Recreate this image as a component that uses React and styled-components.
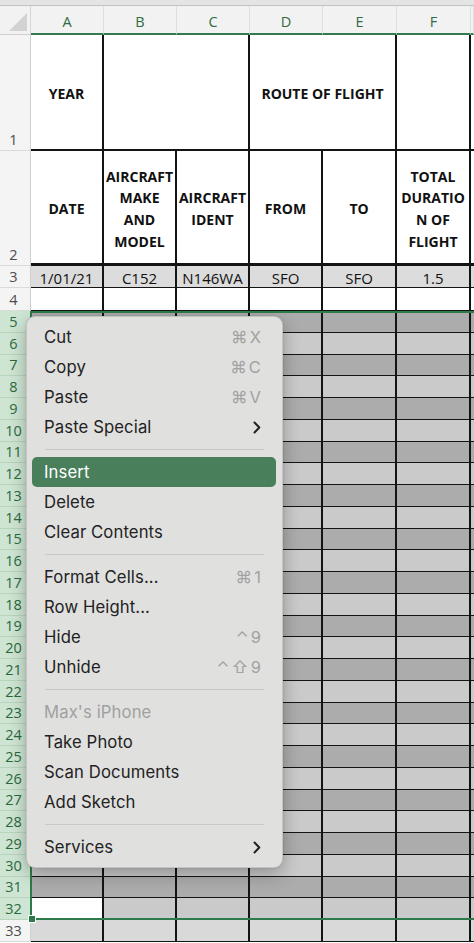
import React from 'react'
import styled, { createGlobalStyle } from 'styled-components'

const GlobalStyle = createGlobalStyle`
  html, body {
    margin: 0;
    padding: 0;
    background: #fff;
    overflow: hidden;
  }
  body {
    font-family: "Open Sans", "Liberation Sans", sans-serif;
  }
`

const Page = styled.div`
  position: relative;
  width: 474px;
  height: 943px;
  overflow: hidden;
  background: #fff;
`

const TopStrip = styled.div`
  height: 5px;
  background: #e4e4e4;
  border-bottom: 1px solid #c2c2c2;
`

const Grid = styled.div`
  display: grid;
  grid-template-columns: 31px 73px 73px 73px 73px 74px 74px 1fr;
  grid-template-rows: 29px 116px 115px 22px 23px repeat(29, 21.75px);
`

const Corner = styled.div`
  position: relative;
  background: #f2f2f2;
  border-right: 1px solid #d6d6d6;
  border-bottom: 1px solid #d0d0d0;
  box-sizing: border-box;
  &::after {
    content: '';
    position: absolute;
    right: 3px;
    bottom: 3px;
    border-style: solid;
    border-width: 0 0 18px 18px;
    border-color: transparent transparent #d2d2d2 transparent;
  }
`

const ColHead = styled.div`
  display: flex;
  align-items: center;
  justify-content: center;
  background: #f2f2f2;
  border-right: 1px solid #dedede;
  border-bottom: 2px solid #357a4c;
  box-sizing: border-box;
  color: #2f6b44;
  font-size: 14.5px;
  padding-top: 4px;
`

const RowHead = styled.div`
  display: flex;
  align-items: flex-end;
  justify-content: center;
  box-sizing: border-box;
  padding: 0 3px 0 0;
  font-size: 14.5px;
  line-height: 20px;
  background: ${p => (p.$selected ? '#cfe5d3' : '#f4f4f4')};
  color: ${p => (p.$selected ? '#2a6a3d' : '#4c4c4c')};
  border-bottom: 1px solid ${p => (p.$selected ? '#b7d4bd' : '#dadada')};
  border-right: 1px solid ${p => (p.$selected ? '#a9ccb0' : '#d0d0d0')};
`

const Cell = styled.div`
  grid-column: span ${p => p.$span || 1};
  display: flex;
  align-items: center;
  justify-content: center;
  box-sizing: border-box;
  padding-top: 4px;
  text-align: center;
  background: ${p => p.$bg || '#fff'};
  border-right: ${p => (p.$last ? 'none' : '2px solid #141414')};
  border-bottom: ${p => p.$bottom || '1px'} solid #141414;
  font-size: ${p => (p.$bold ? '14px' : '15px')};
  font-weight: ${p => (p.$bold ? 700 : 400)};
  line-height: 21.7px;
  color: #111;
  white-space: nowrap;
  overflow: hidden;
`

const Selection = styled.div`
  position: absolute;
  top: 311px;
  left: 30px;
  right: -6px;
  height: 609px;
  border: 2px solid #2f7a4b;
  box-sizing: border-box;
  pointer-events: none;
`

const Handle = styled.div`
  position: absolute;
  left: 28px;
  top: 915px;
  width: 6px;
  height: 6px;
  background: #2f7a4b;
  border: 1px solid #fff;
`

const Menu = styled.div`
  position: absolute;
  top: 316px;
  left: 26px;
  width: 257px;
  padding: 5px 0 5px;
  box-sizing: border-box;
  background: #e0e0df;
  border-radius: 9px;
  border: 0.5px solid rgba(0, 0, 0, 0.12);
  box-shadow: 0 6px 18px rgba(0, 0, 0, 0.28), 0 0 2px rgba(0, 0, 0, 0.15);
  font-family: Inter, "DejaVu Sans", sans-serif;
`

const Item = styled.div`
  display: flex;
  align-items: center;
  justify-content: space-between;
  height: 30px;
  margin: 0 6px 0 5px;
  padding: 0 15px 0 12px;
  border-radius: 5px;
  font-size: 16.7px;
  letter-spacing: 0.1px;
  background: ${p => (p.$active ? '#4a7f5c' : 'transparent')};
  color: ${p => (p.$active ? '#fff' : p.$disabled ? '#a0a0a0' : '#222')};
`

const Shortcut = styled.span`
  display: flex;
  gap: 2px;
  color: #a2a2a2;
  font-size: 16.5px;
  font-family: Inter, "DejaVu Sans", sans-serif;
`

const Separator = styled.div`
  height: 1px;
  margin: 7px 18px;
  background: #c9c9c9;
`

const Chevron = () => (
  <svg width="8" height="13" viewBox="0 0 8 13">
    <path d="M1.5 1.5 L6.3 6.5 L1.5 11.5" fill="none" stroke="#222" strokeWidth="2" strokeLinecap="round" strokeLinejoin="round" />
  </svg>
)

const menu = [
  { label: 'Cut', key: '⌘X' },
  { label: 'Copy', key: '⌘C' },
  { label: 'Paste', key: '⌘V' },
  { label: 'Paste Special', sub: true },
  'sep',
  { label: 'Insert', active: true },
  { label: 'Delete' },
  { label: 'Clear Contents' },
  'sep',
  { label: 'Format Cells...', key: '⌘1' },
  { label: 'Row Height...' },
  { label: 'Hide', key: '⌃9' },
  { label: 'Unhide', key: '⌃⇧9' },
  'sep',
  { label: "Max's iPhone", disabled: true },
  { label: 'Take Photo' },
  { label: 'Scan Documents' },
  { label: 'Add Sketch' },
  'sep',
  { label: 'Services', sub: true },
]

const cols = ['A', 'B', 'C', 'D', 'E', 'F']
const Lines = ({ lines }) => (
  <div>
    {lines.map(l => (
      <div key={l}>{l}</div>
    ))}
  </div>
)

const App = () => {
  const band = []
  for (let r = 5; r <= 33; r++) {
    const selected = r <= 32
    const odd = r % 2 === 1
    const bg = selected ? (odd ? '#acacac' : '#cacaca') : odd ? '#d9d9d9' : '#fff'
    band.push(
      <React.Fragment key={r}>
        <RowHead $selected={selected}>{r}</RowHead>
        {cols.map(c => (
          <Cell key={c} $bg={r === 32 && c === 'A' ? '#fff' : bg} />
        ))}
        <Cell $bg={bg} $last />
      </React.Fragment>
    )
  }

  return (
    <Page>
      <GlobalStyle />
      <TopStrip />
      <Grid>
        <Corner />
        {cols.map(c => (
          <ColHead key={c}>{c}</ColHead>
        ))}
        <ColHead />

        <RowHead>1</RowHead>
        <Cell $bold $bottom="2px">YEAR</Cell>
        <Cell $span={2} $bottom="2px" />
        <Cell $span={2} $bold $bottom="2px">ROUTE OF FLIGHT</Cell>
        <Cell $bottom="2px" />
        <Cell $last $bottom="2px" />

        <RowHead>2</RowHead>
        <Cell $bold $bottom="3px">DATE</Cell>
        <Cell $bold $bottom="3px"><Lines lines={['AIRCRAFT', 'MAKE', 'AND', 'MODEL']} /></Cell>
        <Cell $bold $bottom="3px"><Lines lines={['AIRCRAFT', 'IDENT']} /></Cell>
        <Cell $bold $bottom="3px">FROM</Cell>
        <Cell $bold $bottom="3px">TO</Cell>
        <Cell $bold $bottom="3px"><Lines lines={['TOTAL', 'DURATIO', 'N OF', 'FLIGHT']} /></Cell>
        <Cell $last $bottom="3px" />

        <RowHead>3</RowHead>
        {['1/01/21', 'C152', 'N146WA', 'SFO', 'SFO', '1.5'].map((v, i) => (
          <Cell key={i} $bg="#dcdcdc">{v}</Cell>
        ))}
        <Cell $bg="#dcdcdc" $last />

        <RowHead>4</RowHead>
        {cols.map(c => (
          <Cell key={c} />
        ))}
        <Cell $last />

        {band}
      </Grid>

      <Selection />
      <Handle />

      <Menu>
        {menu.map((m, i) =>
          m === 'sep' ? (
            <Separator key={i} />
          ) : (
            <Item key={i} $active={m.active} $disabled={m.disabled}>
              <span>{m.label}</span>
              {m.key && <Shortcut>{[...m.key].map((k, j) => <span key={j}>{k}</span>)}</Shortcut>}
              {m.sub && <Chevron />}
            </Item>
          )
        )}
      </Menu>
    </Page>
  )
}

export default App
